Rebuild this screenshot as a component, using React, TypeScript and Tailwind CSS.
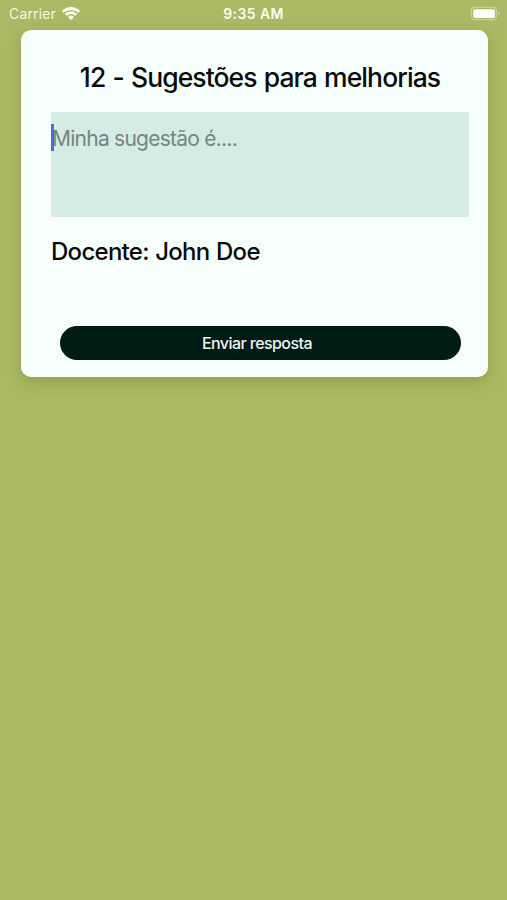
function WifiIcon() {
  return (
    <svg className="h-[14px] w-[18px]" viewBox="0 0 18 14" fill="#fbfef3" aria-hidden>
      <path d="M9 0C5.5 0 2.4 1.4.2 3.7a.4.4 0 0 0 0 .5l1.2 1.2c.2.2.4.2.6 0A10 10 0 0 1 9 2.9a10 10 0 0 1 7 2.5c.2.2.4.2.6 0l1.2-1.2a.4.4 0 0 0 0-.5A12.5 12.5 0 0 0 9 0z" />
      <path d="M9 4.3c-2.2 0-4.2.9-5.7 2.4a.4.4 0 0 0 0 .6l1.3 1.3c.2.2.4.2.6 0A5.7 5.7 0 0 1 9 7.1c1.5 0 2.8.6 3.8 1.5.2.2.4.2.6 0l1.3-1.3a.4.4 0 0 0 0-.6A8.2 8.2 0 0 0 9 4.3z" />
      <path d="M9 8.6c-1.1 0-2 .4-2.7 1.1a.4.4 0 0 0 0 .6l2.4 2.6c.2.2.4.2.6 0l2.4-2.6a.4.4 0 0 0 0-.6A3.9 3.9 0 0 0 9 8.6z" />
    </svg>
  );
}

function BatteryIcon() {
  return (
    <svg className="h-[15px] w-[32px]" viewBox="0 0 32 15" aria-hidden>
      <rect x="1.3" y="1.3" width="25.2" height="12.4" rx="3.5" fill="none" stroke="#fbfef3" strokeOpacity="0.35" strokeWidth="1.2" />
      <rect x="3.3" y="3.2" width="21.6" height="8.8" rx="1.6" fill="#fff" />
      <path d="M28.2 5.6v3.8c.9-.3 1.5-1 1.5-1.9s-.6-1.6-1.5-1.9z" fill="#fbfef3" fillOpacity="0.4" />
    </svg>
  );
}

function StatusBar() {
  return (
    <header className="grid h-[30px] grid-cols-3 items-start pt-1 text-[#fbfef3]">
      <div className="flex items-center gap-1.5 pl-[9px]">
        <span className="text-[14px] leading-5 tracking-[0.15px] text-[#f3f8df]">Carrier</span>
        <WifiIcon />
      </div>
      <span className="text-center text-[14px] font-semibold leading-5 tracking-[0.4px]">9:35 AM</span>
      <div className="flex justify-end pr-[5px] pt-0.5">
        <BatteryIcon />
      </div>
    </header>
  );
}

export default function App() {
  return (
    <div className="min-h-screen bg-[#abb964] font-['Inter','Liberation_Sans',sans-serif]">
      <StatusBar />
      <main className="ml-[21px] mr-[19px] flex h-[347px] flex-col rounded-[10px] bg-[#f7fffc] pl-[30px] pr-[19px] shadow-[0_5px_14px_rgba(60,70,10,0.22)]">
        <h1 className="mt-[29px] text-center text-[26.5px] font-medium leading-9 tracking-[-0.92px] text-[#080b0a] [word-spacing:1px]">
          12 - Sugestões para melhorias
        </h1>
        <div className="mt-[17px] flex h-[105px] items-start bg-[#d4ece4] pt-3">
          <span className="h-[27px] w-[3px] shrink-0 bg-[#4b6ddb]" />
          <span className="-ml-[2px] text-[21px] leading-[29px] tracking-[-0.75px] text-[#75857f]">
            Minha sugestão é....
          </span>
        </div>
        <p className="mt-[18px] text-[24px] font-medium leading-[34px] tracking-[-0.72px] text-[#080b0a] [word-spacing:0.8px]">
          Docente: John Doe
        </p>
        <button
          type="button"
          className="ml-[9px] mr-2 mt-[57px] h-[34px] rounded-full bg-[#001a14] pr-[7px] text-[16px] font-medium leading-[34px] tracking-[-0.56px] text-[#edf5f2]"
        >
          Enviar resposta
        </button>
      </main>
    </div>
  );
}
